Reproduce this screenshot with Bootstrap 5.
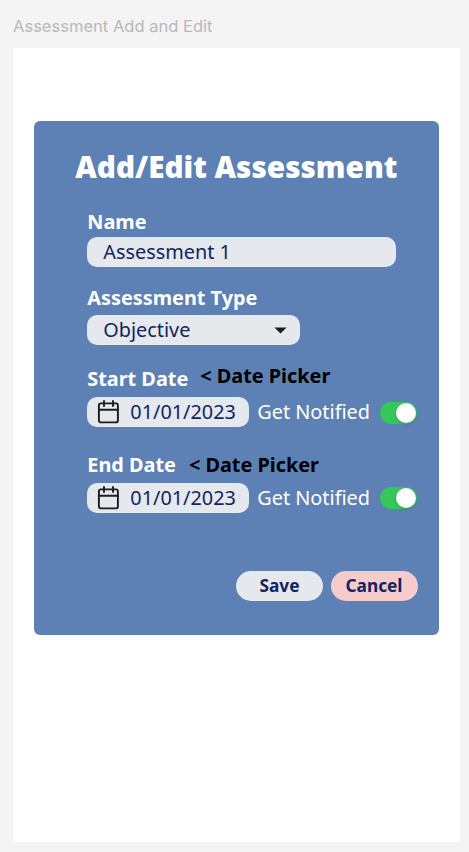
<!DOCTYPE html>
<html lang="en">
<head>
<meta charset="utf-8">
<meta name="viewport" content="width=device-width, initial-scale=1">
<title>Assessment Add and Edit</title>
<link rel="stylesheet" href="https://cdn.jsdelivr.net/npm/bootstrap@5.3.0/dist/css/bootstrap.min.css">
<style>
body{background:#f4f4f4;height:852px;overflow:hidden;font-family:"Noto Sans","Open Sans",sans-serif;font-size:19.85px;line-height:30px}
.frame-title{font:400 16.55px/24px Inter,sans-serif;color:#b8b8b8;padding:14px 0 10px 13px}
.artboard{margin-left:13px;width:446.5px;height:794px;padding:73px 0 0 21px}
.panel{width:404.5px;height:514px;background:#5d81b5;border:0;border-radius:6px;padding:26px 0 0 53.3px;color:#fff}
.panel h1{font:800 29.7px/40px "Open Sans",sans-serif;margin:0 0 20px -12px}
.field-label{font-weight:700;height:30px;line-height:30px}
.type-label{margin-top:16px}
.start-label{margin-top:19px}
.end-label{margin-top:23px}
.note{color:#000;font-weight:700}
.start-note{margin:-3px 0 3px 12px}
.end-note{margin-left:13px}
.field{background:#e5e9ee;color:#13235f;border-radius:10px;height:30px;line-height:30px;padding:0 0 0 16px}
.name-field{width:309px;margin-top:-.5px}
.type-field{width:212.5px;padding-right:12.5px;margin-top:2.5px}
.date-row{margin-top:3px}
.end-row{margin-top:2.6px}
.date-field{width:161.5px;padding-left:10px;gap:11px}
.notify{margin-left:8.5px;width:122.7px;flex:none}
.form-switch .form-check-input.toggle{width:37px;height:22px;margin:0;float:none;border:0;background-color:#35c759;background-image:none;box-shadow:none}
.form-switch.switch-box{padding:0;margin:1px 0 0;min-height:0}
.knob{position:absolute;right:1.2px;top:1px;width:20px;height:20px;border-radius:50%;background:#fff;box-shadow:0 1px 3px rgba(0,0,0,.2);pointer-events:none}
.actions{gap:7.5px;padding-right:21px;margin-top:58.6px}
.action{width:87px;height:30px;border:0;border-radius:15px;padding:0;font-size:17.3px;font-weight:700;line-height:30px;color:#13235f;background:#e5e9ee}
.action.cancel{background:#f4cccc}
</style>
</head>
<body>
<div class="frame-title">Assessment Add and Edit</div>
<main class="artboard bg-white">
<form class="panel card">
<h1 class="text-nowrap">Add/Edit Assessment</h1>
<div class="field-label">Name</div>
<div class="field name-field">Assessment 1</div>
<div class="field-label type-label">Assessment Type</div>
<div class="field type-field d-flex align-items-center justify-content-between"><span>Objective</span><svg width="13" height="7" viewBox="0 0 13 7"><path d="M.4.5h12.2L6.5 6.6z" fill="#1c1c1c"/></svg></div>
<div class="field-label start-label d-flex text-nowrap"><span>Start Date</span><span class="note start-note">&lt; Date Picker</span></div>
<div class="date-row d-flex align-items-center text-nowrap">
<div class="field date-field d-flex align-items-center"><svg width="22" height="24" viewBox="0 0 22 24" fill="none" stroke="#1c1c1c" stroke-width="1.9" stroke-linecap="round"><rect x="1.9" y="3.4" width="19" height="19" rx="2"/><path d="M2 9.7h19M7 1v5M16 1v5"/></svg><span>01/01/2023</span></div>
<span class="notify">Get Notified</span>
<div class="form-check form-switch switch-box position-relative d-flex"><input class="form-check-input toggle" type="checkbox" role="switch" aria-label="Notify start" checked><span class="knob"></span></div>
</div>
<div class="field-label end-label d-flex text-nowrap"><span>End Date</span><span class="note end-note">&lt; Date Picker</span></div>
<div class="date-row end-row d-flex align-items-center text-nowrap">
<div class="field date-field d-flex align-items-center"><svg width="22" height="24" viewBox="0 0 22 24" fill="none" stroke="#1c1c1c" stroke-width="1.9" stroke-linecap="round"><rect x="1.9" y="3.4" width="19" height="19" rx="2"/><path d="M2 9.7h19M7 1v5M16 1v5"/></svg><span>01/01/2023</span></div>
<span class="notify">Get Notified</span>
<div class="form-check form-switch switch-box position-relative d-flex"><input class="form-check-input toggle" type="checkbox" role="switch" aria-label="Notify end" checked><span class="knob"></span></div>
</div>
<div class="actions d-flex justify-content-end"><button type="button" class="btn action">Save</button><button type="button" class="btn action cancel">Cancel</button></div>
</form>
</main>
<script src="https://cdn.jsdelivr.net/npm/bootstrap@5.3.0/dist/js/bootstrap.bundle.min.js"></script>
</body>
</html>
